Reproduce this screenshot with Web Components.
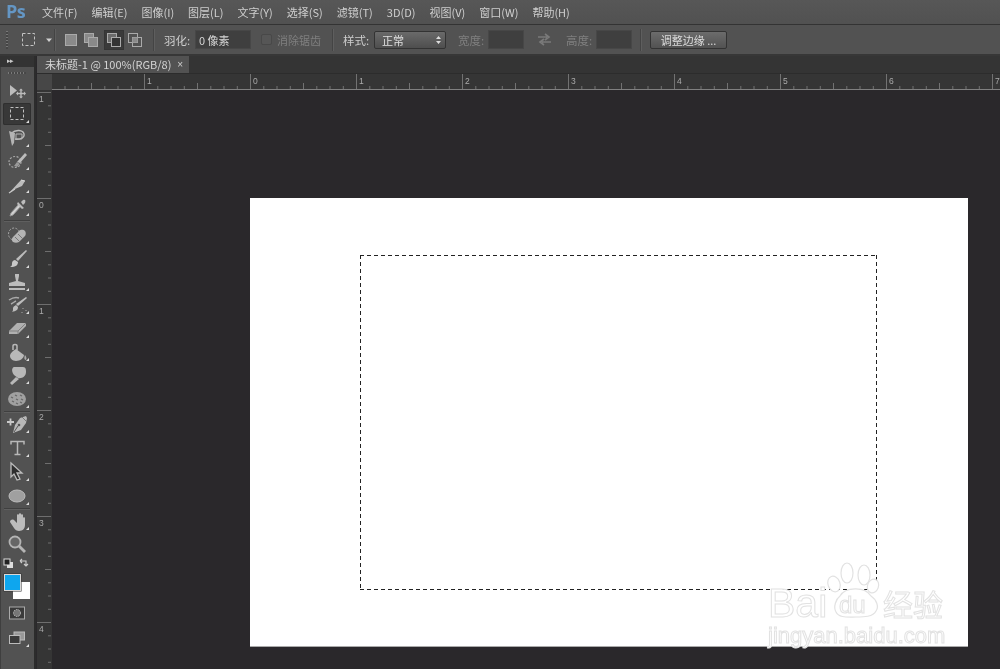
<!DOCTYPE html>
<html lang="zh"><head><meta charset="utf-8"><title>Photoshop</title>
<style>html,body{margin:0;padding:0;height:100%;overflow:hidden;background:#2a282b}</style>
</head><body>
<ps-app>
  <ps-menubar slot="menu">
    <ps-menu-item>文件(F)</ps-menu-item><ps-menu-item>编辑(E)</ps-menu-item><ps-menu-item>图像(I)</ps-menu-item><ps-menu-item>图层(L)</ps-menu-item><ps-menu-item>文字(Y)</ps-menu-item><ps-menu-item>选择(S)</ps-menu-item><ps-menu-item>滤镜(T)</ps-menu-item><ps-menu-item>3D(D)</ps-menu-item><ps-menu-item>视图(V)</ps-menu-item><ps-menu-item>窗口(W)</ps-menu-item><ps-menu-item>帮助(H)</ps-menu-item>
  </ps-menubar>
  <ps-options slot="options"></ps-options>
  <ps-toolbar slot="tools"></ps-toolbar>
  <ps-docarea slot="doc"></ps-docarea>
</ps-app>
<script>
const FONT = '"Noto Sans CJK SC","Liberation Sans",sans-serif';
function def(name, html, setup){
  customElements.define(name, class extends HTMLElement{
    connectedCallback(){
      if(this.shadowRoot) return;
      const r=this.attachShadow({mode:'open'});
      r.innerHTML = typeof html==='function'?html(this):html;
      if(setup) setup(r,this);
    }
  });
}
def('ps-app',`<style>
:host{display:grid;width:1000px;height:669px;overflow:hidden;grid-template-columns:36px 1fr;grid-template-rows:25px 31px 1fr;background:#2a282b;font-family:${FONT};filter:blur(.35px)}
.a{grid-column:1/3}
</style><div class="a"><slot name="menu"></slot></div><div class="a"><slot name="options"></slot></div><slot name="tools"></slot><slot name="doc"></slot>`);

def('ps-menubar',`<style>
:host{display:flex;height:25px;box-sizing:border-box;background:linear-gradient(#575757,#515151);align-items:center;color:#cfcfcf;font-size:11px;border-bottom:1px solid #333}
.logo{width:42px;box-sizing:border-box;padding-left:6px;font:700 18px "Open Sans","Liberation Sans",sans-serif;color:#6496c4;letter-spacing:-.5px;margin-top:-2px}
.items{display:flex;gap:14px}
</style><div class="logo">Ps</div><div class="items"><slot></slot></div>`);
def('ps-menu-item',`<style>:host{display:block;white-space:nowrap;line-height:24px;margin-top:-1px}</style><slot></slot>`);

const optSel=(inner,on,w,ml)=>`<span class="mode ${on?'on':''}" style="width:${w||18}px;margin-left:${ml||0}px"><svg width="18" height="18" viewBox="0 0 18 18">${inner}</svg></span>`;
def('ps-options',`<style>
:host{display:flex;height:31px;box-sizing:border-box;background:#525252;border-bottom:2px solid #373737;align-items:center;color:#cdcdcd;font-size:11px;padding-left:6px;white-space:nowrap}
.grip{width:2px;height:18px;background:repeating-linear-gradient(#777 0 1px,#454545 1px 3px)}
.sep{width:1px;height:22px;background:#444;border-right:1px solid #5e5e5e}
.mode{display:flex;height:20px;align-items:center;justify-content:center;box-sizing:border-box}
.mode.on{background:#3a3a3a;box-shadow:inset 0 0 0 1px #353535}
.inp{height:19px;background:#3f3f3f;box-sizing:border-box;border:1px solid #474747}
.txt{display:flex;align-items:center;padding-left:3px;color:#d5d5d5;font-size:11px}
.chk{width:11px;height:11px;background:#565656;border:1px solid #484848;border-radius:2px;box-sizing:border-box}
.dim{color:#7f7f7f}
.lbl{font-size:11.5px}
.sel{display:flex;align-items:center;justify-content:space-between;width:72px;height:18px;box-sizing:border-box;border:1px solid #333;border-radius:2px;background:linear-gradient(#6a6a6a,#4e4e4e);padding:0 3px 0 7px;color:#e0e0e0}
.btn{width:77px;height:18px;box-sizing:border-box;border:1px solid #333;border-radius:2px;background:linear-gradient(#6c6c6c,#525252);display:flex;align-items:center;justify-content:center;color:#ddd;font-size:11px}
</style>
<div class="grip"></div>
<svg style="margin-left:13px" width="15" height="15" viewBox="0 0 15 15"><rect x="1.500" y="1.500" width="12" height="12" fill="none" stroke="#c4c4c4" stroke-dasharray="3 2"/></svg>
<svg style="margin-left:9px" width="8" height="6" viewBox="0 0 8 6"><path d="M1 1.500h6L4 5z" fill="#d0d0d0"/></svg>
<div class="sep" style="margin-left:1px"></div>
${optSel('<rect x="3.500" y="3.500" width="11" height="11" fill="#8a8a8a" stroke="#aaa"/>',0,18,6)}
${optSel('<rect x="2.500" y="2.500" width="9" height="9" fill="#8a8a8a" stroke="#aaa"/><rect x="6.500" y="6.500" width="9" height="9" fill="#8a8a8a" stroke="#aaa"/>',0,18,2)}
${optSel('<rect x="2.500" y="2.500" width="9" height="9" fill="#6c6c6c" stroke="#aaa"/><rect x="6.500" y="6.500" width="9" height="9" fill="#333" stroke="#aaa"/>',1,20,4)}
${optSel('<rect x="2.500" y="2.500" width="9" height="9" fill="none" stroke="#aaa"/><rect x="6.500" y="6.500" width="9" height="9" fill="none" stroke="#aaa"/><rect x="6.500" y="6.500" width="5" height="5" fill="#8a8a8a"/>',0,18,2)}
<div class="sep" style="margin-left:9px"></div>
<span class="lbl" style="margin-left:9px;width:31px">羽化:</span>
<div class="inp txt" style="width:56px;">0 像素</div>
<div class="chk" style="margin-left:10px"></div>
<span class="dim" style="margin-left:5px;width:55px">消除锯齿</span>
<div class="sep"></div>
<span class="lbl" style="margin-left:9px;width:31px">样式:</span>
<div class="sel"><span>正常</span><svg width="7" height="10" viewBox="0 0 7 10"><path d="M3.500 1 6 4H1zM3.500 9 1 6h5z" fill="#ddd"/></svg></div>
<span class="dim lbl" style="margin-left:12px;width:30px">宽度:</span>
<div class="inp" style="width:36px"></div>
<svg style="margin-left:13px" width="15" height="13" viewBox="0 0 15 13"><path d="M1 4h9M8 1l4 3-4 3M14 9H5M7 6l-4 3 4 3" fill="none" stroke="#7a7a7a" stroke-width="1.600"/></svg>
<span class="dim lbl" style="margin-left:14px;width:30px">高度:</span>
<div class="inp" style="width:36px"></div>
<div class="sep" style="margin-left:8px"></div>
<div class="btn" style="margin-left:8px">调整边缘 ...</div>`);

const I={
move:`<path d="M4 5v11l7-5.500z" fill="#bcbcbc"/><path d="M15 10v7M11.500 13.500h7" stroke="#bcbcbc" stroke-width="1.400"/><path d="M15 8.500l-2 2h4zM15 18.500l-2-2h4zM10 13.500l2-2v4zM20 13.500l-2-2v4z" fill="#bcbcbc"/>`,
marquee:`<rect x="4.500" y="4.500" width="13" height="12" fill="none" stroke="#c0c0c0" stroke-dasharray="3 2"/>`,
lasso:`<path d="M5 6.500C10 2 17 3 18 7c1 4-5 6-9 5" fill="none" stroke="#bbb" stroke-width="1.400"/><path d="M3 4l6 2-1 10-2 3-1-5z" fill="#b4b4b4"/><path d="M10 7h6v5h-6z" fill="none" stroke="#b4b4b4"/>`,
quick:`<ellipse cx="9" cy="12" rx="6" ry="5.500" fill="none" stroke="#aaa" stroke-dasharray="2 1.500" stroke-width="1.200"/><path d="M19 3l2 2-7 8-3-1z" fill="#bcbcbc"/><path d="M11 12l3 2-3 3-3-1z" fill="#999"/>`,
slice:`<path d="M4 19L15 7l4 1-3 5-7 3z" fill="#bcbcbc"/><path d="M15 7l4 1" stroke="#ddd"/><path d="M3 20l6-4" stroke="#ccc" stroke-width="1.200"/>`,
dropper:`<path d="M13 8l-8 9-1 3 3-1 8-9" fill="#d0d0d0" stroke="#999"/><path d="M12 6l6 6-2 1-5-5zM15 6l2-2c2-1 3 0 2 3l-2 2z" fill="#bcbcbc"/>`,
heal:`<ellipse cx="8" cy="10" rx="5.500" ry="6" fill="none" stroke="#a8a8a8" stroke-dasharray="2 1.500"/><path d="M7 18c-2-2-1-4 0-5l6-6c2-2 5-1 6 0s1 4 0 5l-6 6c-2 1-4 1-6 0z" fill="#b4b4b4"/><path d="M9 13l5 5M12 10l5 5" stroke="#777"/>`,
brush:`<path d="M20 2l1 1-9 10-2-2z" fill="#bcbcbc"/><path d="M9 12l3 2c0 3-2 5-8 5 2-1 2-2 2-4 0-2 2-3 3-3z" fill="#c8c8c8"/>`,
stamp:`<path d="M9 3h4v2l-1 5 7 2v3H3v-3l7-2-1-5z" fill="#bcbcbc"/><rect x="3" y="17" width="16" height="2" fill="#bcbcbc"/>`,
history:`<path d="M20 3l1 1-9 8-2-2z" fill="#bcbcbc"/><path d="M10 11l2 2c0 3-2 4-6 5 1-1 1-2 1-3 0-3 2-3 3-4z" fill="#bcbcbc"/><path d="M3 6c3-2 7-3 10-2M5 10c2-1 3-2 5-3" stroke="#aaa" stroke-width="1.500" fill="none"/><path d="M17 14v1M20 16v1M16 18v1" stroke="#aaa"/>`,
eraser:`<path d="M3 13l8-8h9v3l-8 8H3z" fill="#b0b0b0"/><path d="M3 13h9l8-8M12 13v3" stroke="#808080" fill="none"/>`,
bucket:`<path d="M10 8l8 6c0 3-4 6-8 6-4 0-6-3-6-5 0-3 3-5 6-7z" fill="#b8b8b8"/><path d="M7 9V5c0-2 4-2 4 0v4" fill="none" stroke="#b8b8b8" stroke-width="1.500"/><path d="M19 14c1 1 2 3 1 5-2 0-2-3-1-5z" fill="#aaa"/>`,
dodge:`<path d="M8 3h9c3 0 3 3 3 5 0 4-4 7-8 6l-4-3C6 9 5 4 8 3z" fill="#b8b8b8"/><path d="M10 13l3 2-7 6-2-2z" fill="#b8b8b8"/>`,
sponge:`<ellipse cx="11" cy="11" rx="9" ry="7" fill="#a0a0a0"/><path d="M5 9l2 1M9 7l2 1M14 7l2 1M6 13l2 1M10 11l2 1M15 11l2 1M10 15l2 1M14 14l2 1" stroke="#666" stroke-width="1.300"/>`,
pen:`<path d="M1 9h7M4.500 5.500v7" stroke="#c8c8c8" stroke-width="1.800"/><path d="M20 3l-6 2-5 7-2 8 8-3 5-7 1-5z" fill="#b8b8b8"/><path d="M8 19l4-6" stroke="#555"/><circle cx="13" cy="12" r="1.300" fill="#555"/><path d="M16 4l4 4" stroke="#777"/>`,
text:`<path d="M5 7.500V4.500h13v3M11.500 4.500v13M8.500 17.500h6" fill="none" stroke="#b8b8b8" stroke-width="1.500"/>`,
path:`<path d="M5 2v14l3-3 3 6 3-1-3-6h5z" fill="#2e2e2e" stroke="#bcbcbc" stroke-width="1.300"/>`,
ellipse:`<ellipse cx="11" cy="11" rx="8" ry="6" fill="#a0a0a0" stroke="#bcbcbc"/>`,
hand:`<path d="M4 12l4 6c1 2 3 3 5 3 4 0 6-3 6-6V8c0-1-2-1-2 0v3-6c0-1-2-1-2 0v5-6c0-1-2-1-2 0v6-5C13 4 11 4 11 5v8L8 10c-2-1-4 0-4 2z" fill="#bcbcbc"/>`,
zoom:`<circle cx="9" cy="9" r="5.500" fill="#666" stroke="#b4b4b4" stroke-width="1.800"/><path d="M13 13l6 6" stroke="#b4b4b4" stroke-width="2.800"/>`,
mask:`<rect x="3.500" y="5" width="15" height="12" fill="#3a3a3a" stroke="#aaa"/><circle cx="11" cy="11" r="3.500" fill="#777" stroke="#bbb" stroke-dasharray="1.500 1"/>`,
screen:`<rect x="8" y="5" width="10.500" height="8" fill="#999" stroke="#bbb"/><rect x="3.500" y="8.500" width="10.500" height="8" fill="#3a3a3a" stroke="#bbb"/>`
};
def('ps-tool',(h)=>{const corner=h.hasAttribute('corner');return `<style>
:host{display:flex;justify-content:center;align-items:center;width:28px;height:22px;position:relative;margin:0 auto ${h.getAttribute('gap')||'1.300px'};box-sizing:border-box;flex:none}
:host([active]){background:#383838;box-shadow:inset 0 0 0 1px #2f2f2f;border-radius:2px}
.c{position:absolute;right:2px;bottom:2px;width:0;height:0;border-left:3px solid transparent;border-bottom:3px solid #ddd}
</style><svg width="22" height="22" viewBox="0 0 22 22">${I[h.getAttribute('icon')]}</svg>${corner?'<i class="c"></i>':''}`});
def('ps-toolsep',`<style>:host{display:block;height:1px;background:#3f3f3f;border-bottom:1px solid #5f5f5f;margin:0 4px 0;flex:none}</style>`);
def('ps-toolbar',(h)=>`<style>
:host{display:flex;flex-direction:column;width:36px;box-sizing:border-box;background:#525252;border-right:2px solid #2c2c2c;height:100%;box-shadow:inset 1px 0 0 #3f3f3f}
.hd{height:11px;background:#333;color:#c8c8c8;font:7px/10px "Liberation Sans",sans-serif;padding-left:7px;letter-spacing:-1px;flex:none}
.gr{height:2px;margin:5px 8px 6px;background:repeating-linear-gradient(90deg,#7a7a7a 0 1px,#474747 1px 3px);flex:none}
.wrap{position:relative;width:26px;height:25px;margin:5px 0 3px 4px;flex:none}
.fg,.bg{position:absolute;box-sizing:border-box}
.fg{background:#0ea6ee;left:0;top:0;width:17px;height:17px;z-index:1;border:1px solid #d8d8d8;box-shadow:0 0 0 .5px #333}
.bg{background:#fff;left:9px;top:8px;width:17px;height:17px}
.mini{display:flex;justify-content:space-between;margin:2px 5px 0 3px;height:11px;flex:none}
</style>
<div class="hd">&#9656;&#9656;</div><div class="gr"></div>
<ps-tool icon="move"></ps-tool>
<ps-tool icon="marquee" corner active></ps-tool>
<ps-tool icon="lasso" corner></ps-tool>
<ps-tool icon="quick" corner></ps-tool>
<ps-tool icon="slice" corner></ps-tool>
<ps-tool icon="dropper" corner gap="2px"></ps-tool>
<ps-toolsep></ps-toolsep>
<ps-tool icon="heal" corner style="margin-top:2px"></ps-tool>
<ps-tool icon="brush" corner></ps-tool>
<ps-tool icon="stamp" corner></ps-tool>
<ps-tool icon="history" corner></ps-tool>
<ps-tool icon="eraser" corner></ps-tool>
<ps-tool icon="bucket" corner></ps-tool>
<ps-tool icon="dodge" corner></ps-tool>
<ps-tool icon="sponge" corner gap="1px"></ps-tool>
<ps-toolsep></ps-toolsep>
<ps-tool icon="pen" corner gap="2px"></ps-tool>
<ps-tool icon="text" corner gap="2px"></ps-tool>
<ps-tool icon="path" corner gap="2px"></ps-tool>
<ps-tool icon="ellipse" corner gap="1px"></ps-tool>
<ps-toolsep></ps-toolsep>
<ps-tool icon="hand" corner gap="1px"></ps-tool>
<ps-tool icon="zoom"></ps-tool>
<div class="mini"><svg width="11" height="11" viewBox="0 0 11 11"><rect x="4" y="4" width="6" height="6" fill="#ddd"/><rect x="1" y="1" width="6" height="6" fill="#222" stroke="#ddd"/></svg><svg width="11" height="11" viewBox="0 0 11 11"><path d="M2 3h6v5M2 3l2-2M2 3l2 2M8 8l-2-2M8 8l2-2" stroke="#ccc" fill="none" stroke-width="1.100"/></svg></div>
<div class="wrap"><div class="fg"></div><div class="bg"></div></div>
<ps-tool icon="mask" gap="3px"></ps-tool>
<ps-tool icon="screen" corner></ps-tool>`);

def('ps-ruler',(h)=>`<style>:host{display:block;background:#353535}svg{display:block}</style><div id="r"></div>`,
 (r,h)=>{
  const v=h.getAttribute('dir')==='v';
  const W=v?15:948, H=v?579:16, org=v?108:198;
  const S=106; let s='';
  for(let k=-3;k<=8;k++){
    const p=org+k*S;
    for(let i=0;i<8;i++){
      const q=p+i*S/8;
      if(q<0||q>(v?H:W))continue;
      const L=i===0?(v?15:16):(i===4?6:3);
      if(v) s+=`<rect x="${W-L-1}" y="${q.toFixed(1)}" width="${L}" height="1" fill="#6e6e6e"/>`;
      else s+=`<rect x="${q.toFixed(1)}" y="${H-L-1}" width="1" height="${L}" fill="#727272"/>`;
    }
    const lab=Math.abs(k);
    if(v){ if(p+2>=0&&p+10<H) s+=`<text x="2" y="${(p+9.5).toFixed(1)}" font-size="8.500" fill="#aaa" font-family="Liberation Sans">${lab}</text>`; }
    else if(p+3>=0&&p+8<=W) s+=`<text x="${(p+3).toFixed(1)}" y="10" font-size="8.500" fill="#aaa" font-family="Liberation Sans">${lab}</text>`;
  }
  if(!v) s+=`<rect y="${H-1}" width="${W}" height="1" fill="#808080"/>`;
  r.getElementById('r').innerHTML=`<svg width="${W}" height="${H}">${s}</svg>`;
 });

def('ps-tab',`<style>:host{display:flex;align-items:center;height:17px;width:152px;box-sizing:border-box;background:#525252;color:#d4d4d4;font:11px/17px ${FONT};padding:0 6px 0 8px;justify-content:space-between;white-space:nowrap}i{font:normal 10px "Liberation Sans",sans-serif;color:#ccc}</style><span><slot></slot></span><i>×</i>`);
def('ps-watermark',`<style>
:host{position:absolute;left:518px;top:362px;width:190px;height:90px;pointer-events:none}
.t{position:absolute;color:#fff;-webkit-text-stroke:1px #e2e2e2;white-space:nowrap}
svg{position:absolute;left:0;top:0}
</style>
<svg width="190" height="90" viewBox="0 0 190 90" fill="#fff" stroke="#e2e2e2" stroke-width="1.200">
<ellipse cx="66" cy="24" rx="6" ry="8" transform="rotate(-20 66 24)"/>
<ellipse cx="79" cy="13" rx="6" ry="10"/><ellipse cx="96" cy="15" rx="6" ry="10"/>
<ellipse cx="105" cy="26" rx="5.500" ry="7" transform="rotate(20 105 26)"/>
<path d="M72 36c5-9 25-10 31 0 6 4 8 11 5 15-3 6-12 6-20 6-9 0-17 1-20-5-3-5 0-13 4-16z"/>
</svg>
<div class="t" style="left:0;top:20px;font:400 41px/46px 'Liberation Sans',sans-serif">Bai</div>
<div class="t" style="left:71px;top:31px;font:400 24px/28px 'Liberation Sans',sans-serif">du</div>
<div class="t" style="left:115px;top:24px;font:400 30px/38px 'Noto Sans CJK SC',sans-serif">经验</div>
<div class="t" style="left:0;top:63px;font:400 22px/26px 'Liberation Sans',sans-serif">jingyan.baidu.com</div>`);
def('ps-page',`<style>
:host{display:block;position:relative;width:718px;height:448px;background:#fff;margin:108px 0 0 198px;box-sizing:border-box;padding:57px 91px 56px 110px;box-shadow:0 1px 0 #aaa}
.m{height:100%;box-sizing:border-box;
background:
 repeating-linear-gradient(90deg,#222 0 4px,transparent 4px 7px) top/100% 1px no-repeat,
 repeating-linear-gradient(90deg,#222 0 4px,transparent 4px 7px) bottom/100% 1px no-repeat,
 repeating-linear-gradient(#222 0 4px,transparent 4px 7px) left/1px 100% no-repeat,
 repeating-linear-gradient(#222 0 4px,transparent 4px 7px) right/1px 100% no-repeat}
</style><div class="m"></div><ps-watermark></ps-watermark>`);
def('ps-docarea',`<style>
:host{display:grid;grid-template-columns:15px 1fr;grid-template-rows:18px 16px 1fr;background:#2a282b;min-width:0;overflow:hidden;margin-left:1px}
.tabs{grid-column:1/3;background:#343434;padding-top:0;box-sizing:border-box;border-bottom:1px solid #2c2c2c}
.corner{background:#474747}
.work{overflow:hidden;display:flow-root;background:#2a282b}
</style><div class="tabs"><ps-tab>未标题-1 @ 100%(RGB/8)</ps-tab></div>
<div class="corner"></div><ps-ruler dir="h"></ps-ruler>
<ps-ruler dir="v"></ps-ruler><div class="work"><ps-page></ps-page></div>`);
</script>
</body></html>
